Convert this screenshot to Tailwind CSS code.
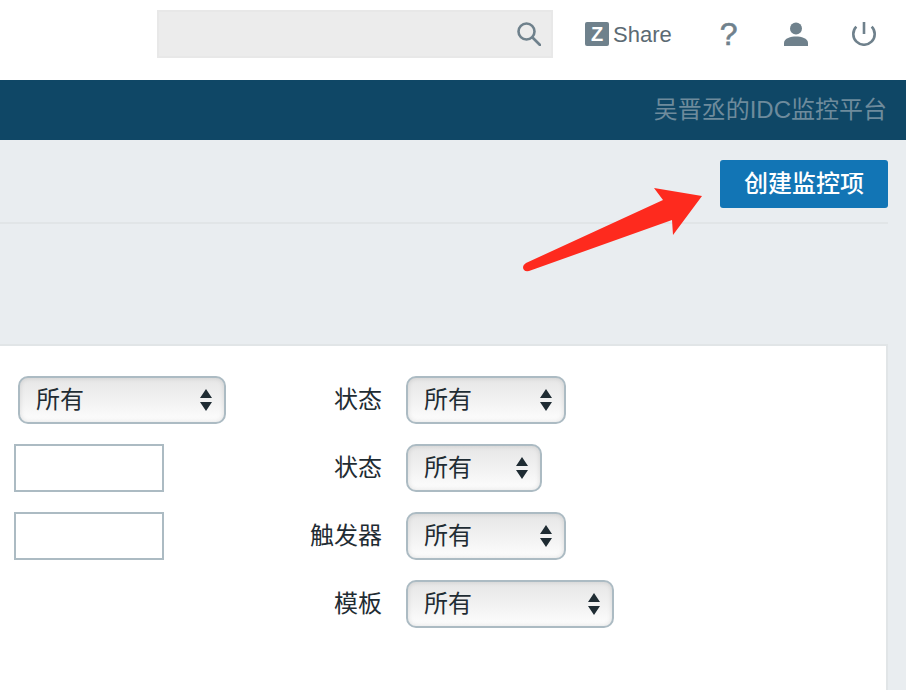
<!DOCTYPE html>
<html lang="en">
<head>
    <meta charset="UTF-8">
    <title>监控项</title>
    <script src="https://cdn.jsdelivr.net/npm/@tailwindcss/browser@4"></script>
</head>
<body class="w-[906px] h-[690px] overflow-hidden bg-[#e9edf0] font-['Liberation_Sans','Noto_Sans_CJK_SC',sans-serif] text-[#1f2c33]">
    <!-- Top bar -->
    <header class="h-20 bg-white flex items-center pl-[157px] pb-3">
        <div class="w-[396px] h-12 bg-[#ececec] border-2 border-[#e8e8e8] flex items-center justify-end pr-[10px]">
            <svg width="24" height="24" viewBox="0 0 24 24" fill="none" stroke="#6f818c" stroke-width="2.6">
                <circle cx="9.5" cy="9.5" r="8"/>
                <path d="M15.5 15.5l7.5 7.5" stroke-linecap="round"/>
            </svg>
        </div>
        <div class="flex items-center ml-[32px]">
            <span class="w-6 h-6 rounded-[2px] bg-[#6f818c] text-white text-[20px] leading-6 font-bold text-center">Z</span>
            <span class="ml-[4px] text-[22px] text-[#5c6a73]">Share</span>
        </div>
        <span class="ml-[48px] text-[32px] leading-none text-[#6f818c] [-webkit-text-stroke:0.6px_#6f818c]">?</span>
        <svg class="ml-[46px]" width="24" height="24" viewBox="0 0 24 24" fill="#6f818c">
            <circle cx="12" cy="6.5" r="6"/>
            <path d="M0 24v-3c0-5 7-6.500 12-6.500s12 1.500 12 6.500v3z"/>
        </svg>
        <svg class="ml-[44px]" width="24" height="24" viewBox="0 0 24 24" fill="none" stroke="#6f818c" stroke-width="2.6">
            <path d="M4.300 4.600A10.700 10.700 0 1 0 19.700 4.600"/>
            <path d="M12 0v12"/>
        </svg>
    </header>

    <!-- Brand strip -->
    <div class="h-[60px] bg-[#0f4766] flex items-center justify-end pr-[19px]">
        <span class="text-[24px] text-[#6e8b9c]">吴晋丞的IDC监控平台</span>
    </div>

    <!-- Page title row -->
    <div class="relative h-[84px] mr-[18px] border-b-2 border-[#e1e5e7] flex justify-end pt-5">
        <button class="w-[168px] h-12 rounded-[3px] bg-[#1275b5] text-white text-[24px] font-medium">创建监控项</button>
        <svg class="absolute left-[520px] top-[44px]" width="190" height="92" viewBox="0 0 190 92">
            <path d="M134 4L182 12L153 51L152 36L9 87Q3 88 3 83Q3 81 6 79L143 16Z" fill="#fe2a1e"/>
        </svg>
    </div>

    <!-- Filter panel -->
    <section class="mt-[120px] mr-[18px] h-[346px] bg-white border-t-2 border-r-2 border-[#e1e5e7] pt-[30px] text-[24px]">
        <div class="grid grid-cols-[286px_72px_1fr] gap-x-6 gap-y-5 items-center">
            <div class="pl-[18px]">
                <div class="w-[208px] h-12 rounded-[10px] border-2 border-[#acbbc3] bg-gradient-to-b from-[#e6e6e6] to-[#fdfdfd] shadow-[inset_0_0_5px_rgba(0,0,0,0.12)] flex items-center justify-between pl-4 pr-3">
                    <span>所有</span>
                    <svg width="12" height="22" viewBox="0 0 12 22" fill="#1f2c33"><path d="M6 0l6 9H0zM6 22l6-9H0z"/></svg>
                </div>
            </div>
            <span class="text-right">状态</span>
            <div class="w-[160px] h-12 rounded-[10px] border-2 border-[#acbbc3] bg-gradient-to-b from-[#e6e6e6] to-[#fdfdfd] shadow-[inset_0_0_5px_rgba(0,0,0,0.12)] flex items-center justify-between pl-4 pr-3">
                <span>所有</span>
                <svg width="12" height="22" viewBox="0 0 12 22" fill="#1f2c33"><path d="M6 0l6 9H0zM6 22l6-9H0z"/></svg>
            </div>

            <div class="pl-[14px]"><div class="w-[150px] h-12 border-2 border-[#acbbc3] bg-white"></div></div>
            <span class="text-right">状态</span>
            <div class="w-[136px] h-12 rounded-[10px] border-2 border-[#acbbc3] bg-gradient-to-b from-[#e6e6e6] to-[#fdfdfd] shadow-[inset_0_0_5px_rgba(0,0,0,0.12)] flex items-center justify-between pl-4 pr-3">
                <span>所有</span>
                <svg width="12" height="22" viewBox="0 0 12 22" fill="#1f2c33"><path d="M6 0l6 9H0zM6 22l6-9H0z"/></svg>
            </div>

            <div class="pl-[14px]"><div class="w-[150px] h-12 border-2 border-[#acbbc3] bg-white"></div></div>
            <span class="text-right">触发器</span>
            <div class="w-[160px] h-12 rounded-[10px] border-2 border-[#acbbc3] bg-gradient-to-b from-[#e6e6e6] to-[#fdfdfd] shadow-[inset_0_0_5px_rgba(0,0,0,0.12)] flex items-center justify-between pl-4 pr-3">
                <span>所有</span>
                <svg width="12" height="22" viewBox="0 0 12 22" fill="#1f2c33"><path d="M6 0l6 9H0zM6 22l6-9H0z"/></svg>
            </div>

            <div></div>
            <span class="text-right">模板</span>
            <div class="w-[208px] h-12 rounded-[10px] border-2 border-[#acbbc3] bg-gradient-to-b from-[#e6e6e6] to-[#fdfdfd] shadow-[inset_0_0_5px_rgba(0,0,0,0.12)] flex items-center justify-between pl-4 pr-3">
                <span>所有</span>
                <svg width="12" height="22" viewBox="0 0 12 22" fill="#1f2c33"><path d="M6 0l6 9H0zM6 22l6-9H0z"/></svg>
            </div>
        </div>
    </section>
</body>
</html>
